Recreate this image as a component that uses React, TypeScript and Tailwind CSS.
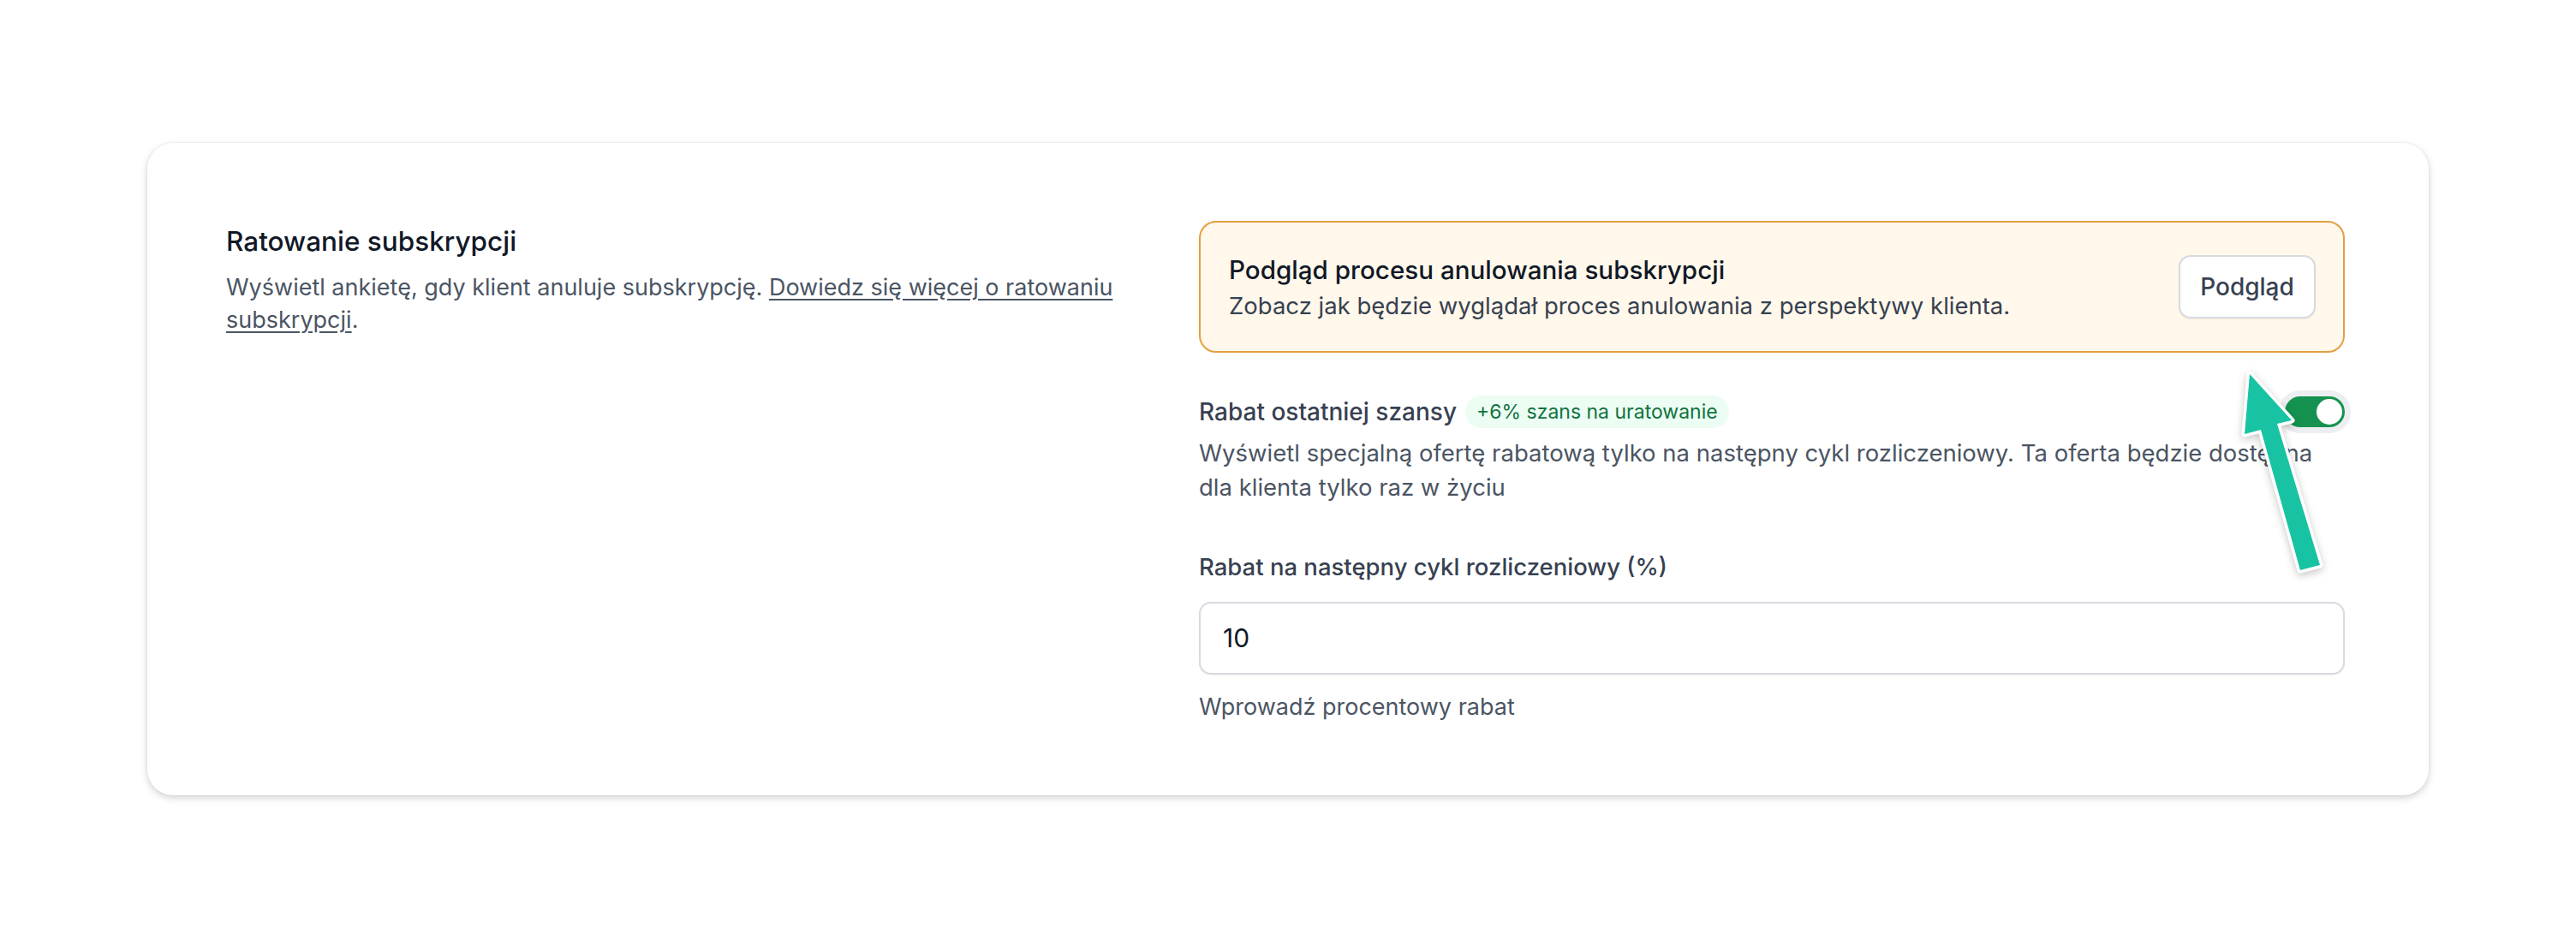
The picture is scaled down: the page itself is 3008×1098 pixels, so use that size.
import React from "react";

const font = { fontFamily: "Inter, 'Noto Sans', sans-serif" };

const Toggle = () => {
  return (
    <div className="relative h-[36px] w-[70px] shrink-0 rounded-full bg-[#15924f] ring-[7px] ring-[#eceef1]">
      <span className="absolute right-[3px] top-[3px] h-[30px] w-[30px] rounded-full bg-white" />
    </div>
  );
};

const Arrow = () => {
  return (
    <svg
      className="absolute left-[2428px] top-[253px] drop-shadow-[0_3px_5px_rgba(0,0,0,0.22)]"
      width="130"
      height="270"
      viewBox="0 0 130 270"
    >
      <polygon
        points="27,17 76,71 59,75 109,240 86,246 40,82 21,87"
        fill="#17c3a2"
        stroke="#ffffff"
        strokeWidth="7"
        strokeLinejoin="round"
        paintOrder="stroke"
      />
    </svg>
  );
};

const App = () => {
  return (
    <div className="min-h-screen bg-white pt-[167px]" style={font}>
      <div className="relative mx-auto flex w-[2664px] gap-[76px] rounded-[30px] bg-white pb-[84px] pl-[92px] pr-[98px] pt-[91px] shadow-[0_0_0_1px_rgba(0,0,0,0.03),0_3px_8px_rgba(0,0,0,0.18)]">
        <div className="w-[1060px] shrink-0 pt-[6px]">
          <h2 className="text-[31.5px] font-medium leading-[36px] text-[#111827]">Ratowanie subskrypcji</h2>
          <p className="mt-[17px] text-[27px] leading-[38px] text-[#4b5563]">
            Wyświetl ankietę, gdy klient anuluje subskrypcję.{" "}
            <a className="underline underline-offset-[4px]">Dowiedz się więcej o ratowaniu subskrypcji</a>.
          </p>
        </div>

        <div className="flex-1">
          <div className="flex h-[154px] items-center justify-between rounded-[20px] border-2 border-[#e3a040] bg-[#fff8eb] pl-[33px] pr-[32px]">
            <div>
              <div className="text-[29.6px] font-medium leading-[44px] text-[#111827]">
                Podgląd procesu anulowania subskrypcji
              </div>
              <div className="text-[27.5px] leading-[40px] text-[#374151]">
                Zobacz jak będzie wyglądał proces anulowania z perspektywy klienta.
              </div>
            </div>
            <button className="h-[74px] w-[160px] rounded-[14px] border-2 border-[#d7dae0] bg-white text-[28px] font-medium text-[#374151] shadow-[0_1px_2px_rgba(0,0,0,0.06)]">
              Podgląd
            </button>
          </div>

          <div className="mt-[50px] flex h-[38px] items-center justify-between">
            <div className="flex items-center gap-[10px]">
              <span className="text-[28px] font-medium leading-[38px] text-[#374151]">Rabat ostatniej szansy</span>
              <span className="rounded-full bg-[#ecfdf3] px-[13px] text-[23px] leading-[38px] text-[#11723f]">
                +6% szans na uratowanie
              </span>
            </div>
            <Toggle />
          </div>
          <p className="mt-[9px] pr-[24px] text-[27.5px] leading-[40px] text-[#4b5563]">
            Wyświetl specjalną ofertę rabatową tylko na następny cykl rozliczeniowy. Ta oferta będzie dostępna dla klienta
            tylko raz w życiu
          </p>

          <label className="mt-[54px] block text-[27.5px] font-medium leading-[39px] text-[#374151]">
            Rabat na następny cykl rozliczeniowy (%)
          </label>
          <div className="mt-[21px] flex h-[85px] items-center rounded-[14px] border-2 border-[#d7dae0] bg-white px-[26px] shadow-[0_1px_2px_rgba(0,0,0,0.05)]">
            <span className="text-[30px] text-[#111827]">10</span>
          </div>
          <p className="mt-[19px] text-[27px] leading-[38px] text-[#4b5563]">Wprowadź procentowy rabat</p>
        </div>

        <Arrow />
      </div>
    </div>
  );
};

export default App;
